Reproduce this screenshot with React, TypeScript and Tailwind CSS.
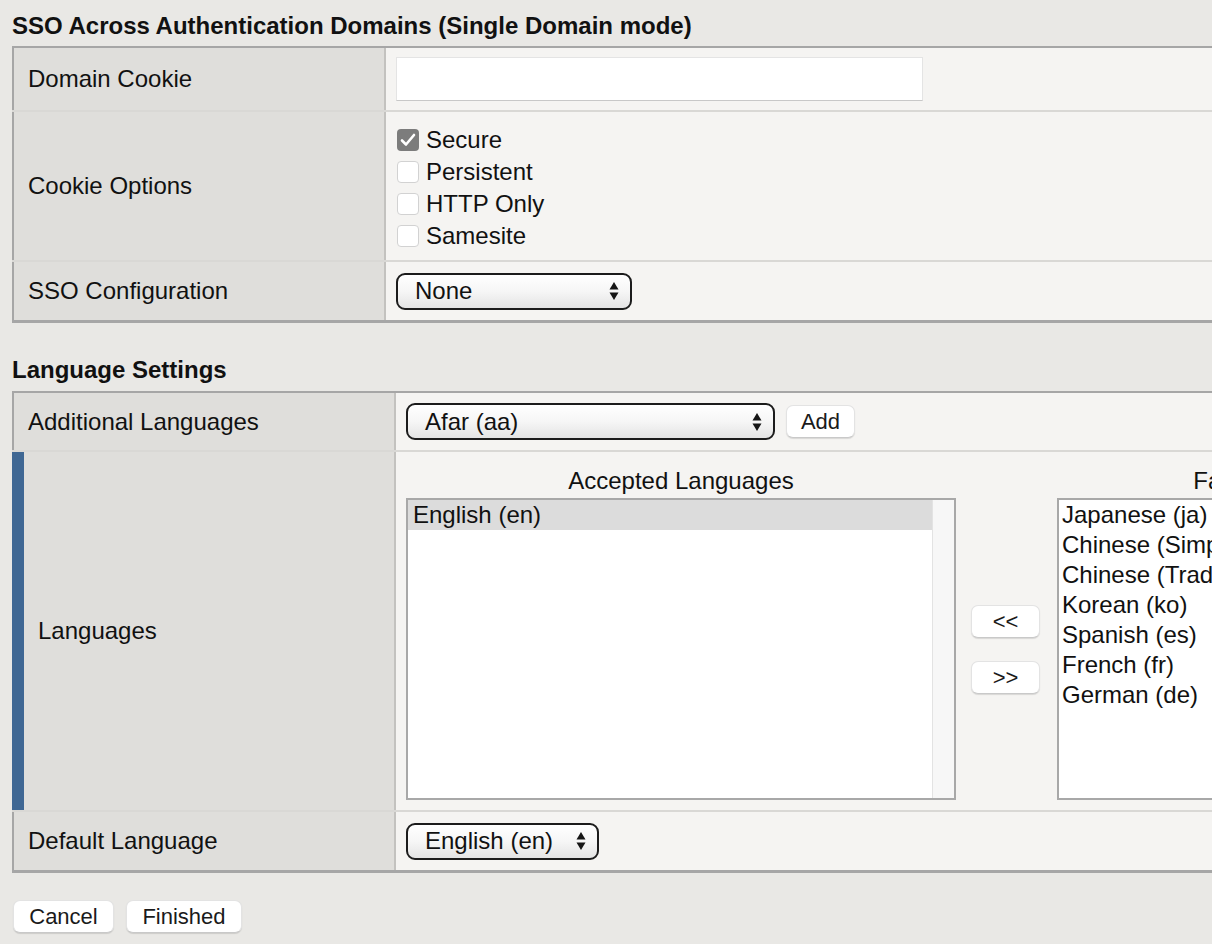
import React from 'react'

const fallbackLanguages = [
  'Japanese (ja)',
  'Chinese (Simplified) (zh-cn)',
  'Chinese (Traditional) (zh-tw)',
  'Korean (ko)',
  'Spanish (es)',
  'French (fr)',
  'German (de)',
]

function Arrows() {
  return (
    <svg width="10" height="20" viewBox="0 0 10 20">
      <path d="M5 1 L9.5 8.5 H0.5 Z" fill="#161616" />
      <path d="M5 19 L9.5 11.5 H0.5 Z" fill="#161616" />
    </svg>
  )
}

function Select({ value, className }: { value: string; className: string }) {
  return (
    <div
      className={`flex items-center justify-between h-[37px] rounded-[9px] border-2 border-[#1c1c1c] bg-linear-to-b from-white via-[#f6f6f6] to-[#e4e4e4] pl-[17px] pr-[11px] text-[24px] ${className}`}
    >
      <span>{value}</span>
      <Arrows />
    </div>
  )
}

function Button({ label, className }: { label: string; className: string }) {
  return (
    <button
      className={`flex items-center justify-center h-[33px] rounded-[7px] bg-white text-[22px] text-[#1a1a1a] border border-[#e3e3e3] border-b-[#c9c9c9] shadow-[0_1px_1px_rgba(0,0,0,0.12)] ${className}`}
    >
      {label}
    </button>
  )
}

function Checkbox({ label, checked }: { label: string; checked?: boolean }) {
  return (
    <div className="flex items-center h-[32px]">
      {checked ? (
        <div className="w-[22px] h-[22px] ml-[1px] rounded-[4px] bg-[#7c7c7c] flex items-center justify-center">
          <svg width="16" height="14" viewBox="0 0 16 14">
            <path d="M2 7.5 L6 11.5 L14 2" stroke="white" strokeWidth="2.6" fill="none" strokeLinecap="round" strokeLinejoin="round" />
          </svg>
        </div>
      ) : (
        <div className="w-[22px] h-[22px] ml-[1px] rounded-[4px] bg-white border border-[#d2d2d2]" />
      )}
      <span className="ml-[7px] text-[24px]">{label}</span>
    </div>
  )
}

function Label({ text, wide, bar }: { text: string; wide?: boolean; bar?: boolean }) {
  return (
    <div
      className={`shrink-0 flex items-center bg-[#dfdedb] border-r-2 border-r-[#c3c2bf] pl-[14px] text-[24px] ${
        wide ? 'w-[384px]' : 'w-[374px]'
      } ${bar ? 'border-l-[12px] border-l-[#3f6793]' : 'border-l-2 border-l-[#a6a6a6]'}`}
    >
      {text}
    </div>
  )
}

export default function App() {
  return (
    <div className="w-[1212px] h-[944px] overflow-hidden bg-[#e9e8e5] pt-[12px] pl-[12px] text-[#111] font-['Liberation_Sans',Arial,sans-serif]">
      {/* SSO section */}
      <h2 className="h-[28px] leading-[28px] text-[24px] font-bold mb-[6px]">
        SSO Across Authentication Domains (Single Domain mode)
      </h2>
      <div className="w-[1700px] border-t-2 border-b-[3px] border-[#a6a6a6] bg-[#f5f4f2]">
        <div className="flex h-[64px] border-b-2 border-[#d9d8d5]">
          <Label text="Domain Cookie" />
          <div className="flex items-center pl-[10px]">
            <div className="w-[527px] h-[44px] bg-white border border-[#e4e4e4] border-b-[#c8c8c8]" />
          </div>
        </div>
        <div className="flex h-[150px] border-b-2 border-[#d9d8d5]">
          <Label text="Cookie Options" />
          <div className="flex flex-col pl-[10px] pt-[12px]">
            <Checkbox label="Secure" checked />
            <Checkbox label="Persistent" />
            <Checkbox label="HTTP Only" />
            <Checkbox label="Samesite" />
          </div>
        </div>
        <div className="flex h-[58px]">
          <Label text="SSO Configuration" />
          <div className="flex items-center pl-[10px]">
            <Select value="None" className="w-[236px]" />
          </div>
        </div>
      </div>

      {/* Language section */}
      <h2 className="h-[28px] leading-[28px] text-[24px] font-bold mt-[33px] mb-[7px]">Language Settings</h2>
      <div className="w-[1700px] border-t-2 border-b-[3px] border-[#a6a6a6] bg-[#f5f4f2]">
        <div className="flex h-[59px] border-b-2 border-[#d9d8d5]">
          <Label text="Additional Languages" wide />
          <div className="flex items-center pl-[10px] gap-[11px]">
            <Select value="Afar (aa)" className="w-[369px]" />
            <Button label="Add" className="w-[69px]" />
          </div>
        </div>
        <div className="flex h-[360px] border-b-2 border-[#d9d8d5]">
          <Label text="Languages" wide bar />
          <div className="flex items-start pl-[10px] pt-[15px]">
            <div className="w-[550px] flex flex-col">
              <div className="h-[28px] leading-[28px] text-[24px] text-center">Accepted Languages</div>
              <div className="mt-[3px] h-[302px] border-2 border-[#a8a8a8] bg-white flex">
                <div className="flex-1">
                  <div className="h-[30px] leading-[30px] pl-[5px] text-[24px] bg-[#dcdcdc]">English (en)</div>
                </div>
                <div className="w-[22px] bg-[#f7f7f7] border-l border-[#e3e3e3]" />
              </div>
            </div>
            <div className="ml-[15px] pt-[31px] h-[333px] flex flex-col justify-center gap-[23px]">
              <Button label="<<" className="w-[69px]" />
              <Button label=">>" className="w-[69px]" />
            </div>
            <div className="ml-[17px] w-[550px] flex flex-col">
              <div className="h-[28px] leading-[28px] text-[24px] text-center whitespace-nowrap">
                Factory Builtin Languages
              </div>
              <div className="mt-[3px] h-[302px] border-2 border-[#a8a8a8] bg-white">
                {fallbackLanguages.map(lang => (
                  <div key={lang} className="h-[30px] leading-[30px] pl-[3px] text-[24px] whitespace-nowrap">
                    {lang}
                  </div>
                ))}
              </div>
            </div>
          </div>
        </div>
        <div className="flex h-[58px]">
          <Label text="Default Language" wide />
          <div className="flex items-center pl-[10px]">
            <Select value="English (en)" className="w-[193px]" />
          </div>
        </div>
      </div>

      {/* Footer buttons */}
      <div className="flex gap-[12px] mt-[27px] ml-[1px]">
        <Button label="Cancel" className="w-[101px]" />
        <Button label="Finished" className="w-[116px]" />
      </div>
    </div>
  )
}
